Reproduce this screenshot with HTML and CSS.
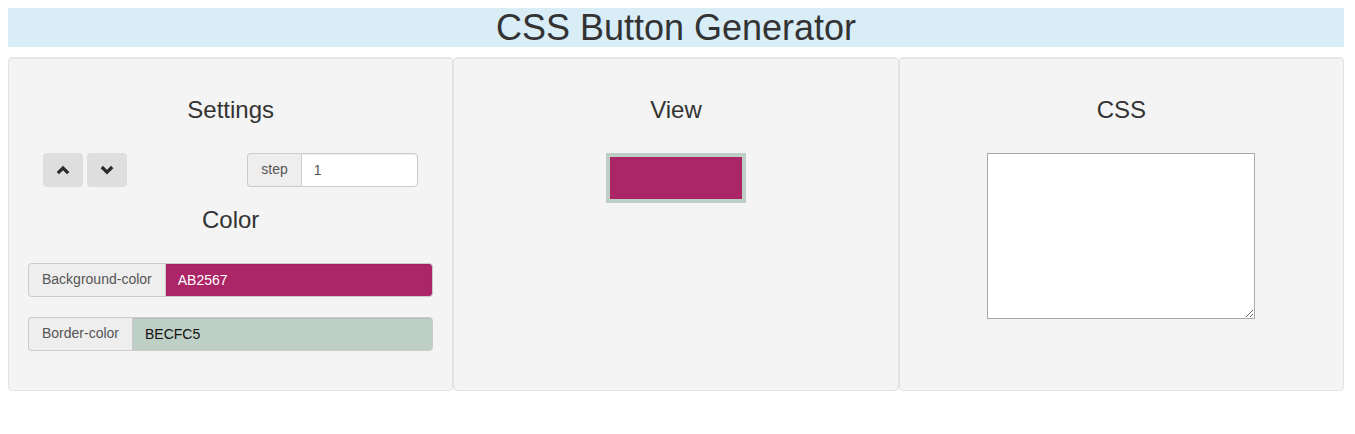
FILE: index.html
```html
<!DOCTYPE html>
<html>
<head>
<meta charset="utf-8">
<title>CSS Button Generator</title>
<link rel="stylesheet" href="styles.css">
</head>
<body>
<div class="page">
  <h1 class="title">CSS Button Generator</h1>
  <div class="panels">
    <div class="well">
      <h3 class="heading">Settings</h3>
      <div class="controls">
        <div class="arrows">
          <button class="btn" type="button" aria-label="up">
            <svg width="14" height="14" viewBox="0 0 14 14"><polyline points="1.8,10.2 7,5 12.2,10.2" fill="none" stroke="#2b2b2b" stroke-width="3.2" stroke-linejoin="miter"/></svg>
          </button>
          <button class="btn" type="button" aria-label="down">
            <svg width="14" height="14" viewBox="0 0 14 14"><polyline points="1.8,4 7,9.2 12.2,4" fill="none" stroke="#2b2b2b" stroke-width="3.2" stroke-linejoin="miter"/></svg>
          </button>
        </div>
        <div class="input-group step-group">
          <span class="addon">step</span>
          <input class="field" type="text" value="1">
        </div>
      </div>
      <h3 class="heading heading-color">Color</h3>
      <div class="input-group color-group">
        <span class="addon">Background-color</span>
        <input class="field field-bg" type="text" value="AB2567">
      </div>
      <div class="input-group color-group">
        <span class="addon">Border-color</span>
        <input class="field field-border" type="text" value="BECFC5">
      </div>
    </div>
    <div class="well">
      <h3 class="heading">View</h3>
      <div class="preview"></div>
    </div>
    <div class="well">
      <h3 class="heading">CSS</h3>
      <textarea class="code"></textarea>
    </div>
  </div>
</div>
</body>
</html>
```
FILE: styles.css
```css
* { box-sizing: border-box; }

body {
  margin: 8px;
  font-family: "Liberation Sans", Arial, Helvetica, sans-serif;
  font-size: 14px;
  line-height: 1.42857;
  color: #333;
  background: #fff;
}

.page {
  width: 1336px;
}

.title {
  margin: 0 0 10px;
  height: 39px;
  background: #d9edf7;
  font-size: 36px;
  font-weight: 400;
  line-height: 39px;
  text-align: center;
  color: #333;
}

.panels {
  display: grid;
  grid-template-columns: repeat(3, 1fr);
}

.well {
  min-height: 334px;
  padding: 19px;
  background: #f4f4f4;
  border: 1px solid #e3e3e3;
  border-radius: 4px;
  box-shadow: inset 0 1px 1px rgba(0, 0, 0, 0.05);
}

.heading {
  margin: 20px 0 30px;
  font-size: 24px;
  font-weight: 400;
  line-height: 1.1;
  text-align: center;
  color: #333;
}

.heading-color {
  margin-bottom: 29px;
}

.controls {
  display: flex;
  justify-content: space-between;
  align-items: flex-start;
  padding: 0 15px;
}

.arrows {
  display: flex;
  gap: 4px;
}

.btn {
  width: 40px;
  height: 34px;
  padding: 0;
  display: flex;
  align-items: center;
  justify-content: center;
  background: #dedede;
  border: 1px solid transparent;
  border-radius: 4px;
}

.input-group {
  display: flex;
  height: 34px;
}

.step-group {
  width: 171px;
}

.color-group {
  width: 100%;
  margin-bottom: 20px;
}

.color-group:last-child {
  margin-bottom: 0;
}

.addon {
  display: flex;
  align-items: center;
  padding: 6px 13px;
  background: #eee;
  border: 1px solid #ccc;
  border-right: 0;
  border-radius: 4px 0 0 4px;
  color: #555;
  font-size: 14px;
  white-space: nowrap;
}

.field {
  flex: 1;
  min-width: 0;
  height: 34px;
  padding: 6px 12px;
  border: 1px solid #ccc;
  border-radius: 0 4px 4px 0;
  background: #fff;
  color: #555;
  font-family: "Liberation Sans", Arial, sans-serif;
  font-size: 14px;
  box-shadow: inset 0 1px 1px rgba(0, 0, 0, 0.075);
  outline: none;
}

.field-bg {
  background: #ab2567;
  color: #fff;
}

.field-border {
  background: #becfc5;
  color: #111;
}

.preview {
  width: 140px;
  height: 50px;
  margin: 0 auto;
  background: #ab2567;
  border: 4px solid #becfc5;
}

.code {
  display: block;
  width: 268px;
  height: 166px;
  margin: 0 auto;
  border: 1px solid #a9a9a9;
  background: #fff;
  padding: 2px;
}
```
